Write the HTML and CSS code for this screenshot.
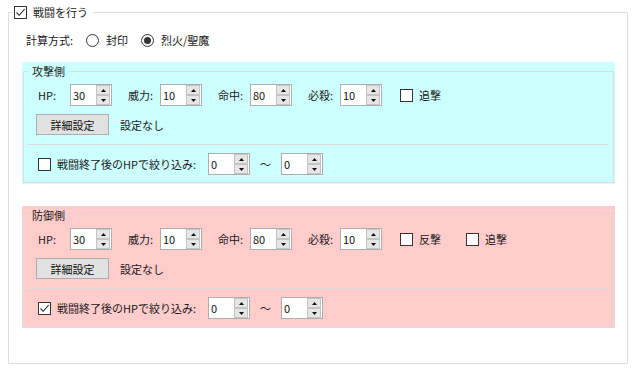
FILE: index.html
```html
<!DOCTYPE html>
<html lang="ja">
<head>
    <meta charset="UTF-8">
    <title>戦闘シミュレーション設定</title>
    <link rel="stylesheet" href="styles.css">
</head>
<body>
    <fieldset class="battle">
        <legend class="battle-title">
            <span class="check is-checked"><svg viewBox="0 0 11 11"><path d="M1.5 5.5 L4.2 8.3 L9.6 2.2" /></svg></span>
            <span>戦闘を行う</span>
        </legend>

        <div class="mode-row">
            <span class="mode-label">計算方式:</span>
            <label class="radio-item"><span class="radio"></span>封印</label>
            <label class="radio-item"><span class="radio is-checked"></span>烈火/聖魔</label>
        </div>

        <!-- attacker -->
        <div class="side side-attack">
            <fieldset class="side-box">
                <legend class="side-title">攻撃側</legend>
                <div class="stat-row">
                    <div class="field">
                        <span class="field-label">HP:</span>
                        <div class="spin"><span class="spin-value">30</span><span class="spin-btns"><span class="spin-btn"><svg viewBox="0 0 5 3"><polygon points="0,3 2.5,0 5,3" /></svg></span><span class="spin-btn"><svg viewBox="0 0 5 3"><polygon points="0,0 5,0 2.5,3" /></svg></span></span></div>
                    </div>
                    <div class="field">
                        <span class="field-label">威力:</span>
                        <div class="spin"><span class="spin-value">10</span><span class="spin-btns"><span class="spin-btn"><svg viewBox="0 0 5 3"><polygon points="0,3 2.5,0 5,3" /></svg></span><span class="spin-btn"><svg viewBox="0 0 5 3"><polygon points="0,0 5,0 2.5,3" /></svg></span></span></div>
                    </div>
                    <div class="field">
                        <span class="field-label">命中:</span>
                        <div class="spin"><span class="spin-value">80</span><span class="spin-btns"><span class="spin-btn"><svg viewBox="0 0 5 3"><polygon points="0,3 2.5,0 5,3" /></svg></span><span class="spin-btn"><svg viewBox="0 0 5 3"><polygon points="0,0 5,0 2.5,3" /></svg></span></span></div>
                    </div>
                    <div class="field">
                        <span class="field-label">必殺:</span>
                        <div class="spin"><span class="spin-value">10</span><span class="spin-btns"><span class="spin-btn"><svg viewBox="0 0 5 3"><polygon points="0,3 2.5,0 5,3" /></svg></span><span class="spin-btn"><svg viewBox="0 0 5 3"><polygon points="0,0 5,0 2.5,3" /></svg></span></span></div>
                    </div>
                    <label class="check-item"><span class="check"></span>追撃</label>
                </div>
                <div class="detail-row">
                    <button class="btn">詳細設定</button>
                    <span class="detail-note">設定なし</span>
                </div>
                <div class="filter-row">
                    <label class="filter-label"><span class="check"></span>戦闘終了後のHPで絞り込み:</label>
                    <div class="spin"><span class="spin-value">0</span><span class="spin-btns"><span class="spin-btn"><svg viewBox="0 0 5 3"><polygon points="0,3 2.5,0 5,3" /></svg></span><span class="spin-btn"><svg viewBox="0 0 5 3"><polygon points="0,0 5,0 2.5,3" /></svg></span></span></div>
                    <span class="tilde">～</span>
                    <div class="spin"><span class="spin-value">0</span><span class="spin-btns"><span class="spin-btn"><svg viewBox="0 0 5 3"><polygon points="0,3 2.5,0 5,3" /></svg></span><span class="spin-btn"><svg viewBox="0 0 5 3"><polygon points="0,0 5,0 2.5,3" /></svg></span></span></div>
                </div>
            </fieldset>
        </div>

        <!-- defender -->
        <div class="side side-defend">
            <fieldset class="side-box">
                <legend class="side-title">防御側</legend>
                <div class="stat-row">
                    <div class="field">
                        <span class="field-label">HP:</span>
                        <div class="spin"><span class="spin-value">30</span><span class="spin-btns"><span class="spin-btn"><svg viewBox="0 0 5 3"><polygon points="0,3 2.5,0 5,3" /></svg></span><span class="spin-btn"><svg viewBox="0 0 5 3"><polygon points="0,0 5,0 2.5,3" /></svg></span></span></div>
                    </div>
                    <div class="field">
                        <span class="field-label">威力:</span>
                        <div class="spin"><span class="spin-value">10</span><span class="spin-btns"><span class="spin-btn"><svg viewBox="0 0 5 3"><polygon points="0,3 2.5,0 5,3" /></svg></span><span class="spin-btn"><svg viewBox="0 0 5 3"><polygon points="0,0 5,0 2.5,3" /></svg></span></span></div>
                    </div>
                    <div class="field">
                        <span class="field-label">命中:</span>
                        <div class="spin"><span class="spin-value">80</span><span class="spin-btns"><span class="spin-btn"><svg viewBox="0 0 5 3"><polygon points="0,3 2.5,0 5,3" /></svg></span><span class="spin-btn"><svg viewBox="0 0 5 3"><polygon points="0,0 5,0 2.5,3" /></svg></span></span></div>
                    </div>
                    <div class="field">
                        <span class="field-label">必殺:</span>
                        <div class="spin"><span class="spin-value">10</span><span class="spin-btns"><span class="spin-btn"><svg viewBox="0 0 5 3"><polygon points="0,3 2.5,0 5,3" /></svg></span><span class="spin-btn"><svg viewBox="0 0 5 3"><polygon points="0,0 5,0 2.5,3" /></svg></span></span></div>
                    </div>
                    <label class="check-item"><span class="check"></span>反撃</label>
                    <label class="check-item"><span class="check"></span>追撃</label>
                </div>
                <div class="detail-row">
                    <button class="btn">詳細設定</button>
                    <span class="detail-note">設定なし</span>
                </div>
                <div class="filter-row">
                    <label class="filter-label"><span class="check is-checked"><svg viewBox="0 0 11 11"><path d="M1.5 5.5 L4.2 8.3 L9.6 2.2" /></svg></span>戦闘終了後のHPで絞り込み:</label>
                    <div class="spin"><span class="spin-value">0</span><span class="spin-btns"><span class="spin-btn"><svg viewBox="0 0 5 3"><polygon points="0,3 2.5,0 5,3" /></svg></span><span class="spin-btn"><svg viewBox="0 0 5 3"><polygon points="0,0 5,0 2.5,3" /></svg></span></span></div>
                    <span class="tilde">～</span>
                    <div class="spin"><span class="spin-value">0</span><span class="spin-btns"><span class="spin-btn"><svg viewBox="0 0 5 3"><polygon points="0,3 2.5,0 5,3" /></svg></span><span class="spin-btn"><svg viewBox="0 0 5 3"><polygon points="0,0 5,0 2.5,3" /></svg></span></span></div>
                </div>
            </fieldset>
        </div>
    </fieldset>
</body>
</html>
```

FILE: styles.css
```css
body {
    margin: 0;
    padding-top: 2px;
    font-family: "Noto Sans CJK JP", "Noto Sans", sans-serif;
    font-size: 11px;
    color: #1a1a1a;
    background: #fff;
}

/* outer group box */
.battle {
    margin: 0 8px;
    min-width: 0;
    border: 1px solid #dcdcdc;
    padding: 7px 12px 35px 13px;
}
.battle-title {
    display: flex;
    align-items: center;
    gap: 6px;
    height: 21px;
    margin-left: -9px;
    padding: 0 5px 0 1px;
    line-height: 21px;
}

/* checkbox and radio glyphs */
.check {
    box-sizing: border-box;
    width: 13px;
    height: 13px;
    flex: none;
    border: 1px solid #333;
    background: #fff;
    display: flex;
}
.check svg {
    width: 11px;
    height: 11px;
    fill: none;
    stroke: #333;
    stroke-width: 1.1;
}
.radio {
    box-sizing: border-box;
    width: 13px;
    height: 13px;
    flex: none;
    border: 1px solid #333;
    border-radius: 50%;
    background: #fff;
    display: flex;
    align-items: center;
    justify-content: center;
}
.radio.is-checked::after {
    content: "";
    width: 7px;
    height: 7px;
    border-radius: 50%;
    background: #333;
}

.mode-row {
    display: flex;
    align-items: center;
    height: 20px;
    padding-left: 4px;
}
.mode-label {
    width: 60px;
}
.radio-item {
    display: flex;
    align-items: center;
    gap: 7px;
    width: 55px;
    flex: none;
    white-space: nowrap;
}
.radio-item + .radio-item {
    width: auto;
}

/* attacker / defender panels */
.side {
    padding: 0 1px 1px;
}
.side-attack {
    margin-top: 12px;
    background: #ccffff;
}
.side-defend {
    margin-top: 22px;
    background: #ffcccc;
}
.side-box {
    margin: 0;
    min-width: 0;
    border: 1px solid #dcdcdc;
    padding: 4px 5px 7px 3px;
}
.side-title {
    height: 18px;
    line-height: 18px;
    margin-left: 2px;
    padding: 0 3px;
}

.stat-row {
    display: flex;
    align-items: center;
    height: 22px;
    padding-left: 11px;
}
.field {
    display: flex;
    align-items: center;
    width: 90px;
    flex: none;
}
.field-label {
    width: 32px;
}
.check-item {
    display: flex;
    align-items: center;
    gap: 6px;
    width: 64px;
    padding-left: 2px;
}

/* numeric up-down */
.spin {
    box-sizing: border-box;
    width: 42px;
    height: 22px;
    flex: none;
    display: flex;
    border: 1px solid #adadad;
    background: #fff;
}
.spin-value {
    flex: 1;
    padding-left: 2px;
    line-height: 20px;
    color: #111;
}
.spin-btns {
    display: flex;
    flex-direction: column;
    width: 14px;
    margin-right: 1px;
}
.spin-btn {
    box-sizing: border-box;
    height: 10px;
    display: flex;
    align-items: center;
    justify-content: center;
    border: 1px solid #c4c4c4;
    background: #e6e6e6;
}
.spin-btn svg {
    width: 5px;
    height: 3px;
    fill: #111;
}

.detail-row {
    display: flex;
    align-items: center;
    gap: 11px;
    margin-top: 8px;
    padding-left: 9px;
}
.btn {
    box-sizing: border-box;
    width: 73px;
    height: 21px;
    padding: 0;
    border: 1px solid #adadad;
    background: #e1e1e1;
    font: inherit;
    color: #111;
}

.filter-row {
    display: flex;
    align-items: center;
    height: 22px;
    margin-top: 9px;
    padding-top: 8px;
    padding-left: 11px;
    border-top: 1px solid #dcdcdc;
}
.filter-label {
    display: flex;
    align-items: center;
    gap: 6px;
    width: 170px;
    flex: none;
}
.tilde {
    width: 31px;
    text-align: center;
}
```
